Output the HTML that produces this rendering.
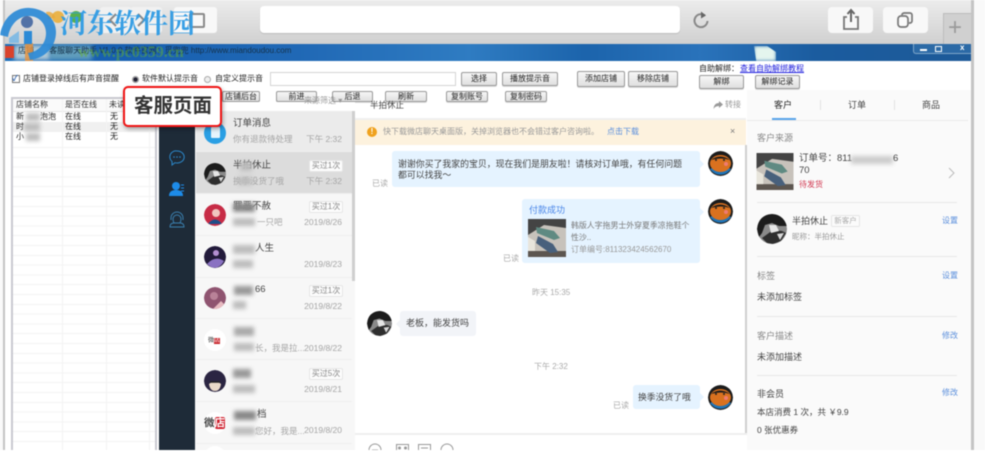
<!DOCTYPE html>
<html lang="zh"><head><meta charset="utf-8"><title>客服页面</title>
<style>
html,body{margin:0;padding:0;background:#fff;width:985px;height:462px;overflow:hidden}
body{font-family:"Liberation Sans","Noto Sans CJK SC",sans-serif;color:#444}
#r{position:absolute;left:0;top:0;width:985px;height:450px;overflow:hidden;background:#f8f8f8;filter:blur(.5px)}
#r *{box-sizing:border-box}
.a{position:absolute}
.t{position:absolute;white-space:nowrap;line-height:12px;font-size:8px}
.b{position:absolute;background:linear-gradient(#f6f6f6,#e0e0e0);border:1px solid #999;border-radius:2px;font-size:8px;color:#222;text-align:center;white-space:nowrap;box-shadow:0 1px 0 #ddd}
.m{position:absolute;background:#bdbdbd;filter:blur(2px)}
.i{position:absolute;left:196px;width:156px;height:41.5px;border-bottom:1px solid #efefef}
.n{position:absolute;left:233px;white-space:nowrap;font-size:9.5px;line-height:12px;color:#444}
.s{position:absolute;left:233px;white-space:nowrap;font-size:8.5px;line-height:12px;color:#a5a5a5}
.d{position:absolute;right:643px;white-space:nowrap;font-size:8.5px;line-height:12px;color:#a5a5a5}
.g{position:absolute;left:309px;width:34px;height:12px;border:1px solid #e6e6e6;background:#fcfcfc;color:#888;font-size:8px;line-height:10px;text-align:center;border-radius:2px}
.c{position:absolute;border-radius:50%;overflow:hidden}
.l{position:absolute;left:757px;width:200px;height:1px;background:#e8e8e8}
.k{color:#5b8fdc;font-size:8px}
.q{color:#888;font-size:9px}
.p{color:#444;font-size:9px}
.u{position:absolute;background:#e5f3ff;border-radius:3px}
</style></head><body>
<svg width="0" height="0" style="position:absolute">
<symbol id="o" viewBox="0 0 25 25"><circle cx="12.5" cy="12.5" r="12.5" fill="#1c1c1c"/><path d="M2 18a12.5 12.5 0 0 0 21 0l-4-2H6z" fill="#1f74b8"/><ellipse cx="12.5" cy="12.5" rx="10.5" ry="8.5" fill="#d9711f"/><path d="M3 9q9-7 19 0-9-3-19 0z" fill="#1c1c1c"/><circle cx="18" cy="13" r="2" fill="#ee7b72"/><circle cx="8" cy="9" r="1" fill="#222"/><circle cx="16" cy="9" r="1" fill="#222"/></symbol>
<symbol id="w" viewBox="0 0 30 30"><circle cx="15" cy="15" r="15" fill="#8a8a8a"/><path d="M0 15Q2 0 15 0q12 0 15 12l-8 0-7-3-7 2-3 8-3 4z" fill="#1c1c1c"/><path d="M5 24l11-8 9 1 4 2-5 8-8 3-6-1z" fill="#2e2e2e"/><path d="M12 11l7 0 3 6-8 2z" fill="#e6e6e6"/><path d="M20 20l7-1-4 7z" fill="#d8d8d8"/></symbol>
<symbol id="f" viewBox="0 0 38 38"><rect width="38" height="38" fill="#c7c2bb"/><path d="M0 0h38v9L16 6 0 16z" fill="#444"/><path d="M0 32h38v6H0z" fill="#5d5650"/><path d="M8 8l18 4 6 7-6 2L9 14z" fill="#5f8a82"/><path d="M10 17l15 8 5 8-8 1-14-10z" fill="#48607c"/><path d="M0 18l7 4v10H0z" fill="#e8e5dc"/></symbol>
</svg>
<div id="r">
<!-- browser chrome -->
<div class="a" style="left:0;top:0;width:985px;height:450px;background:#f9f9f9"></div>
<div class="a" style="left:3px;top:0;width:971px;height:450px;background:#c4c4c4"></div>
<div class="a" style="left:5px;top:0;width:966px;height:44px;background:linear-gradient(#ececec,#d0d0d0)"></div>
<div class="a" style="left:100px;top:7px;width:32px;height:26px;background:#f1f1f1;border-radius:3px"></div>
<div class="a" style="left:130px;top:7px;width:32px;height:26px;background:#f1f1f1;border-radius:3px"></div>
<svg class="a" style="left:106px;top:12px" width="44" height="16" fill="none" stroke="#8a8a8a" stroke-width="2"><path d="M10 2L4 8l6 6M32 2l6 6-6 6"/></svg>
<div class="a" style="left:174px;top:7px;width:43px;height:26px;background:#f8f8f8;border-radius:3px"></div>
<div class="a" style="left:189px;top:13px;width:16px;height:15px;border:2px solid #8a8a8a;border-radius:2px"></div>
<div class="a" style="left:52px;top:11px;width:12px;height:12px;background:#e9b44c;border-radius:50%"></div>
<div class="a" style="left:70px;top:11px;width:12px;height:12px;background:#58b04d;border-radius:50%"></div>
<div class="a" style="left:260px;top:6px;width:420px;height:27px;background:#fff;border-radius:4px;box-shadow:0 1px 1px #bbb"></div>
<svg class="a" style="left:691px;top:10px" width="20" height="20" viewBox="0 0 20 20"><path d="M14 5.500A6.500 6.500 0 1 0 16.500 11" fill="none" stroke="#888" stroke-width="2"/><path d="M10 1.500l5 4-5 3z" fill="#666"/></svg>
<div class="a" style="left:828px;top:7px;width:45px;height:26px;background:#f8f8f8;border-radius:4px"></div>
<svg class="a" style="left:840px;top:8px" width="22" height="24" viewBox="0 0 22 24"><path d="M7 9H4v12h14V9h-3" fill="none" stroke="#777" stroke-width="1.800"/><path d="M11 14V3M7.500 6L11 2l3.500 4" fill="none" stroke="#666" stroke-width="2"/></svg>
<div class="a" style="left:883px;top:7px;width:45px;height:26px;background:#f8f8f8;border-radius:4px"></div>
<svg class="a" style="left:895px;top:10px" width="20" height="20" viewBox="0 0 20 20"><rect x="3" y="6" width="10" height="11" rx="3" fill="#fafafa" stroke="#777" stroke-width="1.700"/><path d="M7 5V4.500A2.500 2.500 0 0 1 9 3h6a2 2 0 0 1 2 2v6a2 2 0 0 1-2 2h-1" fill="none" stroke="#777" stroke-width="1.700"/></svg>
<div class="a" style="left:943px;top:13px;width:28px;height:31px;background:#d0d0d0;border:1px solid #bcbcbc;border-bottom:0;border-right:0"></div>
<div class="t" style="left:948px;top:13px;font-size:24px;line-height:30px;color:#9a9a9a">+</div>
<!-- title bar -->
<div class="a" style="left:5px;top:44px;width:966px;height:17px;background:linear-gradient(90deg,#1c6fba 0,#175fb0 10%,#2068b5 30%,#2f7cc2 48%,#1c64ac 60%,#2a73bb 72%,#1b5c9f 84%,#1d5a98 100%)"></div>
<div class="a" style="left:14px;top:45px;width:36px;height:15px;background:#d6e2e0;opacity:.8;filter:blur(2px)"></div>
<div class="a" style="left:50px;top:45px;width:42px;height:15px;background:#7fb5c0;opacity:.7;filter:blur(2px)"></div>
<div class="a" style="left:754px;top:46px;width:22px;height:15px;background:#e4f5ee;filter:blur(1.500px);clip-path:polygon(0 0,60% 0,100% 40%,100% 100%,10% 100%)"></div>
<div class="a" style="left:5px;top:46px;width:9px;height:12px;background:#d9422c"></div>
<div class="t" style="left:18px;top:45px;font-size:8px;color:#15324a">店铺 · 　客服聊天助手 V1.0.0 软件官网：觅兜兜 http://www.miandoudou.com</div>
<div class="a" style="left:913px;top:44px;width:58px;height:10px;background:#2c6aa6;border:1px solid #7ea6c9;border-top:0;border-right:0;border-radius:0 0 0 3px"></div>
<div class="a" style="left:920px;top:49px;width:7px;height:2px;background:#fff"></div>
<div class="a" style="left:935px;top:46px;width:7px;height:6px;border:1.500px solid #fff"></div>
<div class="t" style="left:960px;top:42px;font-size:8px;color:#fff;font-weight:bold">x</div>
<!-- window body -->
<div class="a" style="left:5px;top:61px;width:966px;height:389px;background:#fff"></div>
<div class="a" style="left:12px;top:75px;width:8px;height:8px;border:1px solid #777;background:#fff"></div>
<div class="t" style="left:12px;top:73px;font-size:8px;color:#3568b0;font-weight:bold">✓</div>
<div class="t" style="left:23px;top:73px;color:#222">店铺登录掉线后有声音提醒</div>
<div class="a" style="left:132px;top:76px;width:7px;height:7px;border:1px solid #999;border-radius:50%;background:radial-gradient(#223 0 2px,#fff 2.500px)"></div>
<div class="t" style="left:142px;top:73px;color:#222">软件默认提示音</div>
<div class="a" style="left:204px;top:76px;width:7px;height:7px;border:1px solid #aaa;border-radius:50%;background:#eee"></div>
<div class="t" style="left:215px;top:73px;color:#222">自定义提示音</div>
<div class="a" style="left:270px;top:72px;width:186px;height:14px;border:1px solid #d5d5d5;background:#fff"></div>
<div class="b" style="left:461px;top:72px;width:36px;height:14px;line-height:12px">选择</div>
<div class="b" style="left:502px;top:72px;width:56px;height:14px;line-height:12px">播放提示音</div>
<div class="b" style="left:577px;top:71px;width:48px;height:16px;line-height:14px">添加店铺</div>
<div class="b" style="left:628px;top:71px;width:50px;height:16px;line-height:14px">移除店铺</div>
<div class="t" style="left:699px;top:63px;color:#222">自助解绑：</div>
<div class="t" style="left:740px;top:63px;color:#2222dd;text-decoration:underline">查看自助解绑教程</div>
<div class="b" style="left:699px;top:75px;width:45px;height:14px;line-height:12px">解绑</div>
<div class="b" style="left:755px;top:75px;width:45px;height:14px;line-height:12px">解绑记录</div>
<!-- table -->
<div class="a" style="left:11px;top:97px;width:146px;height:353px;border:2px solid #c9c9d0;border-bottom:0;background:repeating-linear-gradient(#fff 0 8.800px,#f3f3f3 8.800px 9.800px)"></div>
<div class="a" style="left:13px;top:99px;width:142px;height:13px;background:#fafafa;border-bottom:1px solid #e6e6e6"></div>
<div class="a" style="left:13px;top:112px;width:142px;height:29px;background:#fff"></div>
<div class="a" style="left:13px;top:122px;width:142px;height:10px;background:#f0f0f0"></div>
<div class="a" style="left:62px;top:99px;width:1px;height:351px;background:#f3f3f3"></div>
<div class="a" style="left:106px;top:99px;width:1px;height:351px;background:#f3f3f3"></div>
<div class="a" style="left:149px;top:99px;width:1px;height:351px;background:#f3f3f3"></div>
<div class="t" style="left:16px;top:99px;color:#333">店铺名称</div><div class="t" style="left:65px;top:99px;color:#333">是否在线</div><div class="t" style="left:109px;top:99px;color:#333">未读</div>
<div class="t" style="left:16px;top:111px;color:#222">新　　泡泡</div><div class="t" style="left:65px;top:111px;color:#222">在线</div><div class="t" style="left:110px;top:111px;color:#222">无</div>
<div class="t" style="left:16px;top:121px;color:#222">时</div><div class="t" style="left:65px;top:121px;color:#222">在线</div><div class="t" style="left:110px;top:121px;color:#222">无</div>
<div class="t" style="left:16px;top:131px;color:#222">小</div><div class="t" style="left:65px;top:131px;color:#222">在线</div><div class="t" style="left:110px;top:131px;color:#222">无</div>
<div class="m" style="left:26px;top:113px;width:14px;height:8px"></div><div class="m" style="left:24px;top:123px;width:16px;height:8px"></div><div class="m" style="left:26px;top:133px;width:14px;height:8px"></div>
<!-- row 2 buttons -->
<div class="b" style="left:222px;top:91px;width:38px;height:11px;line-height:9px">店铺后台</div>
<div class="b" style="left:276px;top:91px;width:41px;height:11px;line-height:9px">前进</div>
<div class="b" style="left:332px;top:91px;width:41px;height:11px;line-height:9px">后退</div>
<div class="b" style="left:385px;top:91px;width:42px;height:11px;line-height:9px">刷新</div>
<div class="b" style="left:446px;top:91px;width:42px;height:11px;line-height:9px">复制账号</div>
<div class="b" style="left:505px;top:91px;width:42px;height:11px;line-height:9px">复制密码</div>
<!-- sidebar -->
<div class="a" style="left:155px;top:97px;width:2px;height:353px;background:#c9c9d0"></div>
<div class="a" style="left:159px;top:111px;width:36px;height:339px;background:#1e2b38"></div>
<svg class="a" style="left:169px;top:150px" width="16" height="16" viewBox="0 0 16 16"><path d="M8 1a7 6 0 1 1-2 11.700L3 15v-3.500A6 6 0 0 1 8 1z" fill="none" stroke="#2b87c9" stroke-width="1"/><circle cx="5" cy="7" r=".8" fill="#2b87c9"/><circle cx="8" cy="7" r=".8" fill="#2b87c9"/><circle cx="11" cy="7" r=".8" fill="#2b87c9"/></svg>
<svg class="a" style="left:169px;top:181px" width="16" height="16" viewBox="0 0 16 16"><circle cx="7" cy="5" r="4" fill="#1d8be8"/><path d="M0 15q0-6 7-6t7 6z" fill="#1d8be8"/><path d="M12 4h3M12 7h3M12 10h3" stroke="#1d8be8" stroke-width="1"/></svg>
<svg class="a" style="left:169px;top:211px" width="16" height="17" viewBox="0 0 16 17"><path d="M2 9V7a6 6 0 0 1 12 0v2M1 16q0-4 4-4h6q4 0 4 4zM5 12q-1-2-1-4a4 4 0 0 1 8 0q0 2-1 4" fill="none" stroke="#3a7fae" stroke-width="1"/></svg>
<!-- conversation list -->
<div class="a" style="left:195px;top:102px;width:160px;height:348px;background:#f7f7f7"></div>
<div class="a" style="left:195px;top:102px;width:160px;height:9px;background:#fff"></div>
<div class="t" style="left:304px;top:95px;color:#999">来源筛选 ▾</div>
<div class="a" style="left:352px;top:111px;width:3px;height:170px;background:#cfcfcf"></div>
<div class="i" style="top:111px;height:41px;background:#ebebeb"></div>
<div class="i" style="top:152px;background:#dcdcdc"></div>
<div class="i" style="top:194px"></div><div class="i" style="top:236px"></div><div class="i" style="top:277px"></div><div class="i" style="top:318px"></div><div class="i" style="top:360px"></div><div class="i" style="top:402px"></div>

<div class="c" style="left:204px;top:122px;width:22px;height:22px;background:#2a9fe4"></div>
<div class="a" style="left:211px;top:127px;width:9px;height:11px;background:#e7f4fc;border-radius:1px"></div>
<div class="n" style="top:118px">订单消息</div><div class="s" style="top:133px">你有退款待处理</div><div class="d" style="top:133px">下午 2:32</div>

<svg class="c" style="left:204px;top:163px" width="22" height="22"><use href="#w"/></svg>
<div class="n" style="top:160px">半拍休止</div><div class="m" style="left:240px;top:162px;width:12px;height:9px"></div>
<div class="g" style="top:160px">买过1次</div><div class="s" style="top:175px">换季没货了哦</div><div class="m" style="left:238px;top:177px;width:14px;height:8px"></div><div class="d" style="top:175px">下午 2:32</div>

<svg class="c" style="left:204px;top:204px" width="22" height="22" viewBox="0 0 22 22"><circle cx="11" cy="11" r="11" fill="#c72c46"/><circle cx="12" cy="9" r="4" fill="#f0c6c0"/><path d="M4 20q7-9 14 0z" fill="#1e4d88"/></svg>
<div class="n" style="top:201px">罪恶不赦</div><div class="m" style="left:233px;top:203px;width:22px;height:9px;background:#888"></div>
<div class="g" style="top:201px">买过1次</div><div class="s" style="top:216px;left:257px">一只吧</div><div class="m" style="left:233px;top:218px;width:22px;height:8px"></div><div class="d" style="top:216px">2019/8/26</div>

<svg class="c" style="left:204px;top:246px" width="22" height="22" viewBox="0 0 22 22"><circle cx="11" cy="11" r="11" fill="#221a3a"/><path d="M3 18q8-9 17-3-5 9-13 6z" fill="#8a72c2"/><circle cx="12" cy="7" r="3" fill="#b48fd2"/></svg>
<div class="n" style="top:243px;left:255px">人生</div><div class="m" style="left:233px;top:245px;width:22px;height:9px"></div><div class="m" style="left:233px;top:260px;width:20px;height:8px"></div><div class="d" style="top:258px">2019/8/23</div>

<svg class="c" style="left:204px;top:287px" width="22" height="22" viewBox="0 0 22 22"><circle cx="11" cy="11" r="11" fill="#8f5470"/><circle cx="10" cy="9" r="4" fill="#b98298"/><path d="M9 22l8-8 3 3-4 5z" fill="#e7bac0"/></svg>
<div class="n" style="top:284px;left:255px">66</div><div class="m" style="left:234px;top:286px;width:19px;height:9px;background:#999"></div>
<div class="g" style="top:285px">买过1次</div><div class="m" style="left:233px;top:301px;width:13px;height:8px"></div><div class="d" style="top:300px">2019/8/22</div>

<div class="c" style="left:204px;top:329px;width:22px;height:22px;background:#fff"></div>
<div class="t" style="left:208px;top:335px;font-size:6px;color:#333">微<span style="background:#c9252c;color:#fff">店</span></div>
<div class="m" style="left:234px;top:327px;width:20px;height:9px;background:#aaa"></div>
<div class="s" style="top:342px;left:255px">长，我是拉...</div><div class="m" style="left:234px;top:343px;width:20px;height:8px"></div><div class="d" style="top:342px">2019/8/22</div>

<svg class="c" style="left:204px;top:370px" width="22" height="22" viewBox="0 0 22 22"><circle cx="11" cy="11" r="11" fill="#2b2542"/><path d="M5 14q6-5 12 0-1 7-6 7t-6-7z" fill="#e9d9c8"/><path d="M6 12h10" stroke="#222" stroke-width="1.500"/></svg>
<div class="m" style="left:233px;top:369px;width:18px;height:9px;background:#999"></div>
<div class="g" style="top:368px">买过5次</div><div class="m" style="left:233px;top:385px;width:22px;height:8px"></div><div class="d" style="top:383px">2019/8/21</div>

<div class="c" style="left:204px;top:412px;width:22px;height:22px;background:#fff"></div>
<div class="t" style="left:204px;top:417px;font-size:10.500px;font-weight:bold;color:#444">微<span style="background:#cf1f2d;color:#fff;border-radius:2px">店</span></div>
<div class="n" style="top:409px;left:257px">档</div><div class="m" style="left:234px;top:411px;width:22px;height:9px;background:#888"></div>
<div class="s" style="top:425px;left:255px">您好，我是...</div><div class="m" style="left:233px;top:427px;width:22px;height:8px"></div><div class="d" style="top:424px">2019/8/20</div>
<div class="c" style="left:204px;top:446px;width:22px;height:22px;background:#fff"></div>

<!-- chat -->
<div class="a" style="left:355px;top:103px;width:391px;height:347px;background:#fff"></div>
<div class="a" style="left:355px;top:118px;width:391px;height:2px;background:#f0f0f0"></div>
<div class="t" style="left:370px;top:99px;font-size:8.500px;color:#444">半拍休止</div>
<svg class="a" style="left:713px;top:100px" width="10" height="10" viewBox="0 0 10 10"><path d="M6 1l4 3.500L6 8V6Q2 6 .5 9 1 3 6 3z" fill="#999"/></svg>
<div class="t" style="left:725px;top:99px;color:#999">转接</div>
<div class="a" style="left:355px;top:120px;width:391px;height:25px;background:#fdf2de"></div>
<div class="c" style="left:367px;top:127px;width:10px;height:10px;background:#f0a21e;color:#fff;font-size:8px;line-height:10px;text-align:center;font-weight:bold">!</div>
<div class="t" style="left:383px;top:126px;font-size:8px;color:#999">快下载微店聊天桌面版，关掉浏览器也不会错过客户咨询啦。</div>
<div class="t" style="left:607px;top:126px;font-size:8px;color:#5b8fdc">点击下载</div>
<div class="t" style="left:730px;top:125px;font-size:9px;color:#777">×</div>
<div class="a" style="left:745px;top:145px;width:2px;height:288px;background:#cfcfcf"></div>

<div class="u" style="left:392px;top:151px;width:308px;height:36px"></div>
<div class="t" style="left:398px;top:158px;font-size:8.900px;color:#444">谢谢你买了我家的宝贝，现在我们是朋友啦！请核对订单哦，有任何问题</div>
<div class="t" style="left:398px;top:169px;font-size:8.900px;color:#444">都可以找我～</div>
<div class="t" style="left:372px;top:178px;color:#aaa">已读</div>
<div class="a" style="left:700px;top:160px;border:4px solid transparent;border-left-color:#e5f3ff"></div>
<svg class="c" style="left:708px;top:151px" width="25" height="25"><use href="#o"/></svg>

<div class="u" style="left:522px;top:199px;width:178px;height:64px"></div>
<div class="t" style="left:529px;top:204px;font-size:9px;color:#4a86e8">付款成功</div>
<svg class="a" style="left:528px;top:219px" width="38" height="38"><use href="#f"/></svg>
<div class="t" style="left:571px;top:220px;font-size:7.900px;color:#777">韩版人字拖男士外穿夏季凉拖鞋个</div>
<div class="t" style="left:571px;top:232px;font-size:7.900px;color:#777">性沙..</div>
<div class="t" style="left:571px;top:244px;font-size:8px;color:#999">订单编号:811323424562670</div>
<div class="t" style="left:503px;top:253px;color:#aaa">已读</div>
<div class="a" style="left:700px;top:208px;border:4px solid transparent;border-left-color:#e5f3ff"></div>
<svg class="c" style="left:708px;top:199px" width="25" height="25"><use href="#o"/></svg>

<div class="t" style="left:532px;top:287px;color:#aaa">昨天 15:35</div>
<svg class="c" style="left:367px;top:311px" width="25" height="25"><use href="#w"/></svg>
<div class="a" style="left:400px;top:311px;width:76px;height:25px;background:#f2f4f8;border-radius:3px"></div>
<div class="a" style="left:392px;top:320px;border:4px solid transparent;border-right-color:#f2f4f8"></div>
<div class="t" style="left:406px;top:317px;font-size:9px;color:#444">老板，能发货吗</div>
<div class="t" style="left:534px;top:361px;color:#aaa">下午 2:32</div>
<div class="u" style="left:633px;top:385px;width:67px;height:24px"></div>
<div class="t" style="left:638px;top:391px;font-size:8.800px;color:#444">换季没货了哦</div>
<div class="t" style="left:613px;top:400px;color:#aaa">已读</div>
<div class="a" style="left:700px;top:393px;border:4px solid transparent;border-left-color:#e5f3ff"></div>
<svg class="c" style="left:708px;top:385px" width="25" height="25"><use href="#o"/></svg>

<div class="a" style="left:355px;top:433px;width:392px;height:2px;background:#eee"></div>
<svg class="a" style="left:368px;top:442px" width="86" height="12" viewBox="0 0 86 12" fill="none" stroke="#999" stroke-width="1"><circle cx="7" cy="8" r="6"/><path d="M4 8h6"/><rect x="28.500" y="2.500" width="12" height="10"/><circle cx="31.500" cy="6" r="1" fill="#999"/><circle cx="37.500" cy="6" r="1" fill="#999"/><rect x="50.500" y="2.500" width="12" height="10"/><path d="M53 6h7"/><path d="M73 8a6 6 0 0 1 12 0v4H73z"/></svg>

<!-- right panel -->
<div class="a" style="left:747px;top:90px;width:224px;height:360px;background:#fafafa"></div>
<div class="a" style="left:747px;top:120px;width:221px;height:1px;background:#eaeaea"></div>
<div class="t" style="left:774px;top:99px;color:#222;font-size:9px">客户</div>
<div class="t" style="left:848px;top:99px;color:#444;font-size:9px">订单</div>
<div class="t" style="left:922px;top:99px;color:#444;font-size:9px">商品</div>
<div class="a" style="left:820px;top:100px;width:1px;height:10px;background:#e2e2e2"></div>
<div class="a" style="left:894px;top:100px;width:1px;height:10px;background:#e2e2e2"></div>
<div class="a" style="left:772px;top:118px;width:24px;height:2px;background:#58a4ea"></div>
<div class="t q" style="left:757px;top:132px">客户来源</div>
<svg class="a" style="left:756px;top:153px" width="38" height="37"><use href="#f"/></svg>
<div class="t p" style="left:799px;top:153px;font-size:9.500px">订单号：811</div>
<div class="m" style="left:851px;top:156px;width:42px;height:8px;background:#ccc"></div>
<div class="t p" style="left:893px;top:153px;font-size:9.500px">6</div>
<div class="t p" style="left:799px;top:165px;font-size:9.500px">70</div>
<div class="t" style="left:799px;top:179px;color:#d23a52">待发货</div>
<svg class="a" style="left:948px;top:167px" width="8" height="12"><path d="M1 1l5 5-5 5" fill="none" stroke="#bbb" stroke-width="1"/></svg>
<div class="l" style="top:202px"></div>
<svg class="c" style="left:757px;top:214px" width="30" height="30"><use href="#w"/></svg>
<div class="t p" style="left:792px;top:215px">半拍休止</div>
<div class="a" style="left:831px;top:215px;width:29px;height:12px;border:1px solid #e6e6e6;background:#fbfbfb;color:#aaa;font-size:7.500px;line-height:10px;text-align:center;border-radius:2px;white-space:nowrap">新客户</div>
<div class="t k" style="left:942px;top:215px">设置</div>
<div class="t" style="left:792px;top:231px;color:#999;font-size:7.500px">昵称：半拍休止</div>
<div class="l" style="top:256px"></div>
<div class="t q" style="left:757px;top:270px">标签</div><div class="t k" style="left:942px;top:270px">设置</div>
<div class="t p" style="left:757px;top:291px">未添加标签</div>
<div class="l" style="top:316px"></div>
<div class="t q" style="left:757px;top:330px">客户描述</div><div class="t k" style="left:942px;top:330px">修改</div>
<div class="t p" style="left:757px;top:351px">未添加描述</div>
<div class="l" style="top:375px"></div>
<div class="t p" style="left:757px;top:388px">非会员</div><div class="t k" style="left:942px;top:387px">修改</div>
<div class="t" style="left:757px;top:406px;font-size:8.500px;color:#444">本店消费 1 次，共 ￥9.9</div>
<div class="t" style="left:757px;top:424px;font-size:8.500px;color:#444">0 张优惠券</div>

<!-- callout -->
<div class="a" style="left:123px;top:86px;width:99px;height:41px;background:#fff;border:2px solid #f01414;border-radius:5px;box-shadow:1px 2px 4px rgba(0,0,0,.35)"></div>
<div class="t" style="left:134px;top:94px;font-size:19.500px;line-height:25px;font-weight:bold;color:#333">客服页面</div>
<!-- watermark -->
<svg class="a" style="left:0;top:5px" width="58" height="56" viewBox="0 0 58 56"><path d="M25 38h8v18h-8z" fill="#e8913a" opacity=".8"/><path d="M46 7a7 7 0 0 1 9 6l-7 1z" fill="#e8a93a" opacity=".8"/><path d="M0 30C3 12 16 2 30 3c15 1 26 11 26 24 0 14-10 26-26 28l-2-7c10-1 18-9 18-20 0-9-7-17-17-17C18 11 10 20 8 32z" fill="#2c8ad6" opacity=".92"/><path d="M9 33l10-7v12H9z" fill="#7ab8e4" opacity=".9"/><circle cx="27" cy="17" r="6" fill="#3a5f9c" opacity=".85"/><path d="M24 26h8v13h-8z" fill="#2c8ad6"/></svg>
<div class="t" style="left:60px;top:8px;font-family:'Liberation Serif','Noto Serif CJK SC',serif;font-size:27px;line-height:32px;font-weight:bold;color:#2f9be4;opacity:.95">河东软件园</div>
<div class="t" style="left:78px;top:44px;font-family:'Liberation Serif',serif;font-size:16px;line-height:18px;font-weight:bold;color:#66b030;opacity:.5">www.pc0359.cn</div>
</div>
</body></html>
